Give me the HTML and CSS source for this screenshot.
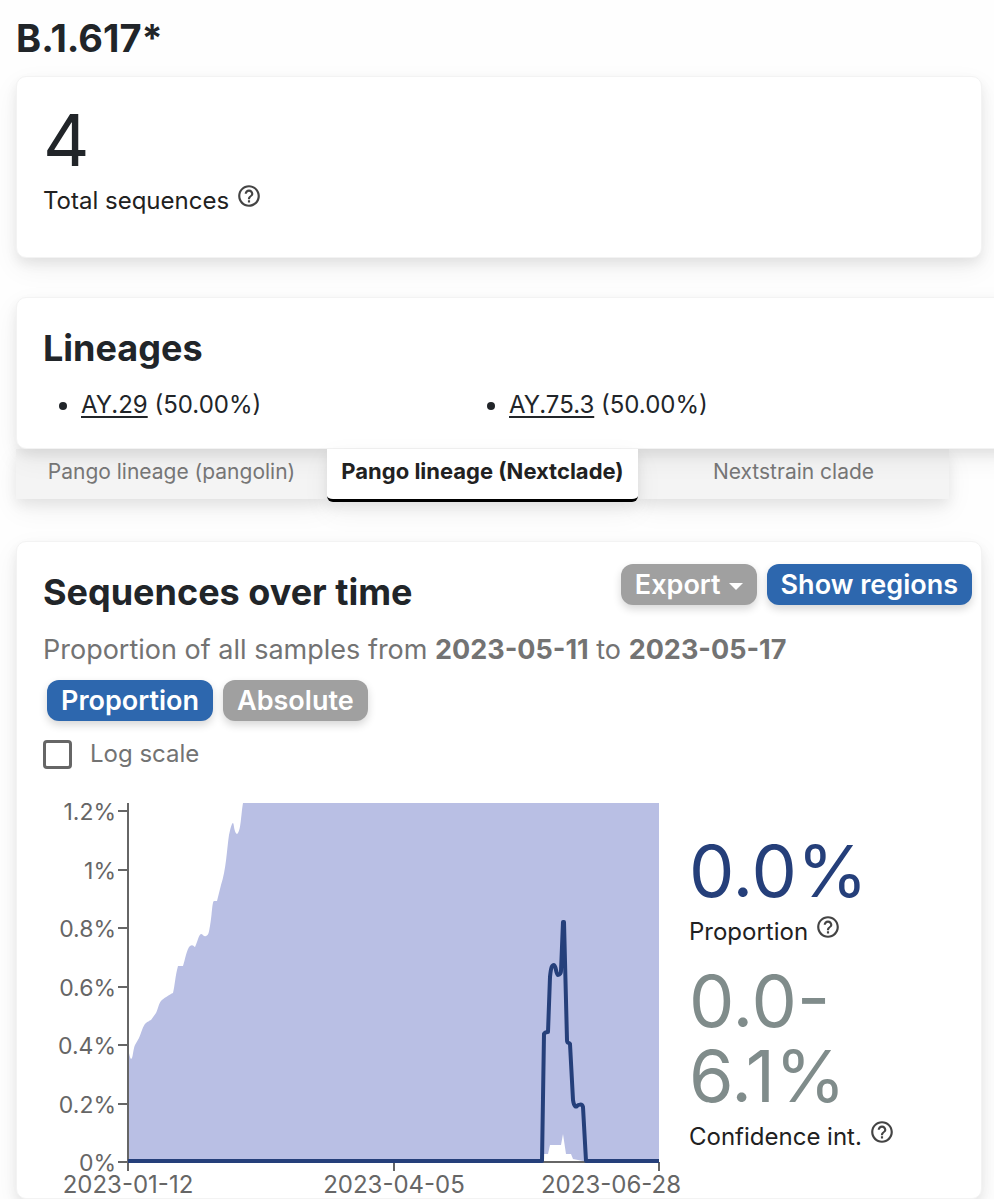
FILE: index.html
```
<!DOCTYPE html>
<html lang="en">
<head>
<meta charset="UTF-8">
<meta name="viewport" content="width=device-width, initial-scale=1.0">
<title>B.1.617*</title>
<link rel="stylesheet" href="styles.css">
</head>
<body>

<!-- Help icon shared by all metrics -->
<svg class="sprite" width="0" height="0" aria-hidden="true">
    <symbol id="help" viewBox="0 0 24 24">
        <path d="M11 18h2v-2h-2v2zm1-16C6.48 2 2 6.48 2 12s4.48 10 10 10 10-4.48 10-10S17.52 2 12 2zm0 18c-4.41 0-8-3.590-8-8s3.590-8 8-8 8 3.590 8 8-3.590 8-8 8zm0-14c-2.210 0-4 1.790-4 4h2c0-1.100.9-2 2-2s2 .9 2 2c0 2-3 1.750-3 5h2c0-2.250 3-2.500 3-5 0-2.210-1.790-4-4-4z"/>
    </symbol>
</svg>

<main class="page">
    <h1 class="title main-title">B.1.617*</h1>

    <section class="card total">
        <div class="value">4</div>
        <div class="label">Total sequences <svg class="help"><use href="#help"/></svg></div>
    </section>

    <!-- Lineages -->
    <section class="card lineages">
        <h2 class="title">Lineages</h2>
        <ul class="lineage-list">
            <li><a href="#">AY.29</a> (50.00%)</li>
            <li><a href="#">AY.75.3</a> (50.00%)</li>
        </ul>
    </section>
    <div class="tabs" role="tablist">
        <button class="tab" role="tab">Pango lineage (pangolin)</button>
        <button class="tab active" role="tab" aria-selected="true">Pango lineage (Nextclade)</button>
        <button class="tab" role="tab">Nextstrain clade</button>
    </div>

    <!-- Sequences over time -->
    <section class="card time">
        <div class="time-head">
            <h2 class="title">Sequences over time</h2>
            <div class="buttons">
                <button class="btn grey">Export<span class="caret"></span></button>
                <button class="btn">Show regions</button>
            </div>
        </div>
        <p class="subtitle">Proportion of all samples from <strong>2023-05-11</strong> to <strong>2023-05-17</strong></p>
        <div class="buttons scale">
            <button class="btn">Proportion</button>
            <button class="btn grey">Absolute</button>
        </div>
        <label class="check"><input type="checkbox"> Log scale</label>

        <div class="chart-row">
            <svg class="chart" viewBox="0 0 646 406">
                <path class="area" d="M85 370V256Q87 267 88 267C90 267 90 257 92 253L96 246C98 242 100 233 103 231S106 229 108 228L113 221C115 217 116 211 118 209S127 202 130 201C132 193 132 185 135 174H140C142 168 144 156 147 154S151 155 152 155C154 151 156 142 158 142S160 145 163 144S166 139 167 134C169 125 169 109 171 109H174L178 93C183 79 184 56 186 43C188 34 189 31 190 31S191 41 194 42C198 40 198 22 200 11H616V370Z"/>
                <path class="gap" d="M501 370V362H505L507 353H518L520 342L523 362H528L530 367L540 369V370Z"/>
                <path class="axis" d="M85 11V379M75 370H616M75 312H85M75 253H85M75 195H85M75 136H85M75 78H85M75 19H85M351 370V379M616 370V379"/>
                <path class="line" d="M85 369H499L501 242Q502 240 505 240L507 185C508 175 509 173 511 173S513 183 515 183S518 181 518 179L520 130H521L524 248C524 252 526 250 527 252L530 308C531 315 533 315 534 314S539 311 540 315L543 369H616"/>
                <g class="ylabels">
                    <text x="73" y="28">1.2%</text>
                    <text x="73" y="87">1%</text>
                    <text x="73" y="145">0.8%</text>
                    <text x="73" y="204">0.6%</text>
                    <text x="73" y="262">0.4%</text>
                    <text x="73" y="321">0.2%</text>
                    <text x="73" y="379">0%</text>
                </g>
                <g class="xlabels">
                    <text x="85" y="401">2023-01-12</text>
                    <text x="351" y="401">2023-04-05</text>
                    <text x="568" y="401">2023-06-28</text>
                </g>
            </svg>
            <div class="stats">
                <div>
                    <div class="value blue">0.0%</div>
                    <div class="label">Proportion <svg class="help"><use href="#help"/></svg></div>
                </div>
                <div>
                    <div class="value muted">0.0-6.1%</div>
                    <div class="label">Confidence int. <svg class="help"><use href="#help"/></svg></div>
                </div>
            </div>
        </div>
    </section>
</main>

</body>
</html>
```
FILE: styles.css
```
* {
    box-sizing: border-box;
}

body {
    margin: 0;
    background-color: #fefefe;
    color: #212529;
    font-family: Inter, "Liberation Sans", sans-serif;
    font-size: 24px;
    line-height: 36px;
    overflow-x: hidden;
}

.sprite {
    position: absolute;
}

.page {
    padding: 16px 12px 0 16px;
    overflow: hidden;
}

.title {
    margin: 0;
    font-size: 36px;
    line-height: 44px;
    font-weight: 700;
}

.main-title {
    font-size: 38px;
}

.card {
    background-color: white;
    border: 1px solid #f3f3f3;
    border-radius: 10px;
    box-shadow: 0 6px 12px rgba(0, 0, 0, 0.07), 0 10px 28px rgba(0, 0, 0, 0.06);
}

.total {
    margin-top: 16px;
    padding: 25px 26px 38px;
}

.value {
    font-size: 72px;
    line-height: 75px;
}

.blue {
    color: #253f7a;
}

.muted {
    color: #808c8b;
}

.label {
    margin-top: 6px;
    color: #212121;
}

.help {
    width: 26px;
    height: 26px;
    fill: #444;
}

/* Lineages */
.lineages {
    position: relative;
    margin: 39px -40px 0 0;
    padding: 28px 26px 25px;
}

.lineage-list {
    display: grid;
    grid-template-columns: 1fr 1fr;
    margin: 17px 0 0;
    padding: 0 58px 0 38px;
}

.lineage-list a {
    color: inherit;
    text-underline-offset: 3px;
}

.tabs {
    display: grid;
    grid-template-columns: repeat(3, 1fr);
    margin-right: 33px;
}

.tab {
    height: 50px;
    padding: 0 0 6px;
    border: none;
    background-color: #f4f4f4;
    box-shadow: 0 6px 12px rgba(0, 0, 0, 0.07), 0 10px 28px rgba(0, 0, 0, 0.06);
    color: #777;
    font-family: inherit;
    font-size: 21px;
    white-space: nowrap;
    cursor: pointer;
}

.tab.active {
    position: relative;
    height: 53px;
    border-bottom: 3px solid black;
    border-radius: 0 0 6px 6px;
    background-color: white;
    color: #212121;
    font-size: 22px;
    font-weight: 700;
}

/* Sequences over time */
.time {
    margin-top: 39px;
    padding: 22px 9px 0 26px;
}

.time-head {
    display: flex;
    justify-content: space-between;
    align-items: flex-start;
}

.time-head .title {
    margin-top: 6px;
}

.buttons {
    display: flex;
    gap: 10px;
}

.scale {
    margin: 12px 4px 0;
}

.btn {
    height: 41px;
    padding: 0 14px;
    border: none;
    border-radius: 12px;
    background-color: #2d67ae;
    box-shadow: 0 4px 8px rgba(0, 0, 0, 0.16);
    color: white;
    font-family: inherit;
    font-size: 27px;
    font-weight: 600;
    cursor: pointer;
}

.grey {
    background-color: #a0a0a0;
}

.caret {
    display: inline-block;
    margin-left: 8px;
    vertical-align: 4px;
    border: 7px solid transparent;
    border-top-color: white;
    border-bottom: 0;
}

.subtitle {
    margin: 18px 0 0;
    color: #737373;
    font-size: 27px;
}

.check {
    display: flex;
    align-items: center;
    gap: 18px;
    margin-top: 15px;
    color: #737373;
}

.check input {
    appearance: none;
    width: 29px;
    height: 29px;
    margin: 0;
    border: 3px solid #666;
    border-radius: 4px;
}

.chart-row {
    display: flex;
    align-items: flex-start;
    margin-top: 20px;
}

.chart {
    flex: 1;
    min-width: 0;
    font-size: 24px;
    fill: #666;
}

.area {
    fill: #b9bfe4;
}

.gap {
    fill: white;
}

.axis {
    fill: none;
    stroke: #666;
    stroke-width: 2;
}

.line {
    fill: none;
    stroke: #253f7a;
    stroke-width: 4;
    stroke-linejoin: round;
}

.ylabels {
    font-size: 23px;
    text-anchor: end;
}

.xlabels {
    text-anchor: middle;
}

.stats {
    display: grid;
    gap: 13px;
    width: 283px;
    padding: 41px 16px 0 0;
}
```
